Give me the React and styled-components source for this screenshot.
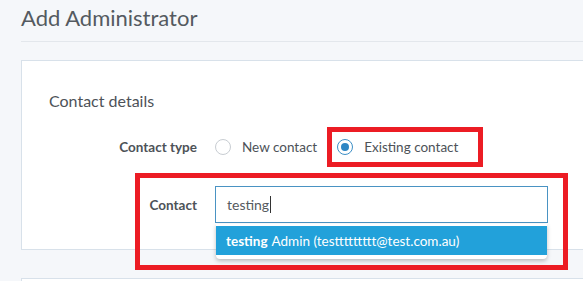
import React from 'react';
import styled, { createGlobalStyle } from 'styled-components';

const GlobalStyle = createGlobalStyle`
  html, body {
    margin: 0;
    padding: 0;
    background: #f5f7fa;
    overflow: hidden;
  }
  body {
    font-family: Lato, 'Open Sans', sans-serif;
    color: #4d5258;
  }
`;

const Page = styled.div`
  padding: 3px 0 0 21px;
  width: 600px;
`;

const Title = styled.h1`
  margin: 0;
  font-size: 22px;
  font-weight: 400;
  line-height: 30px;
  color: #545a60;
  padding-bottom: 8px;
  border-bottom: 1px solid #e3e7ec;
`;

const Card = styled.section`
  margin-top: 18px;
  height: 190px;
  box-sizing: border-box;
  background: #fff;
  border: 1px solid #d8e1ea;
  border-right: none;
  padding: 28px 0 0 27px;
`;

const NextCard = styled(Card)`
  margin-top: 28px;
  height: 40px;
`;

const CardTitle = styled.h2`
  margin: 0;
  font-size: 16px;
  font-weight: 400;
  line-height: 24px;
  color: #4d5258;
`;

const Form = styled.div`
  display: grid;
  grid-template-columns: 148px 1fr;
  column-gap: 18px;
  row-gap: 21px;
  margin-top: 16px;
  align-items: center;
`;

const Label = styled.label`
  justify-self: end;
  font-size: 13.5px;
  font-weight: 700;
  color: #4d5258;
`;

const RadioGroup = styled.div`
  display: flex;
  align-items: center;
  gap: 20px;
  height: 36px;
`;

const RadioOption = styled.div`
  position: relative;
  display: flex;
  align-items: center;
  gap: 11px;
  font-size: 13.5px;
  color: #4d5258;
`;

const RadioCircle = styled.span`
  box-sizing: border-box;
  width: 16px;
  height: 16px;
  border-radius: 50%;
  border: 1px solid ${(p) => (p.checked ? '#3d8fc6' : '#c8cdd2')};
  display: flex;
  align-items: center;
  justify-content: center;

  &::after {
    content: '';
    display: ${(p) => (p.checked ? 'block' : 'none')};
    width: 8px;
    height: 8px;
    border-radius: 50%;
    background: #2d86c4;
  }
`;

const Highlight = styled.span`
  position: absolute;
  inset: ${(p) => p.inset};
  border: 5px solid #ec1c24;
  pointer-events: none;
`;

const Field = styled.div`
  position: relative;
  width: 333px;
`;

const Input = styled.div`
  box-sizing: border-box;
  height: 37px;
  border: 1px solid #4a93c3;
  background: #fff;
  display: flex;
  align-items: center;
  padding-left: 11px;
  font-size: 14px;
  color: #555a60;
`;

const Caret = styled.span`
  display: inline-block;
  width: 1px;
  height: 17px;
  background: #333;
  margin-left: 1px;
`;

const Menu = styled.ul`
  position: absolute;
  top: 38px;
  left: 1px;
  right: 1px;
  margin: 0;
  padding: 2px 0 4px;
  list-style: none;
  background: #fff;
  border-radius: 0 0 4px 4px;
  box-shadow: 0 2px 4px rgba(0, 0, 0, 0.25);
`;

const MenuItem = styled.li`
  height: 29px;
  display: flex;
  align-items: center;
  padding-left: 10px;
  background: #22a1da;
  color: #fff;
  font-size: 13.5px;

  & b {
    font-weight: 700;
    margin-right: 4px;
  }
`;

export default function App() {
  return (
    <>
      <GlobalStyle />
      <Page>
        <Title>Add Administrator</Title>
        <Card>
          <CardTitle>Contact details</CardTitle>
          <Form>
            <Label>Contact type</Label>
            <RadioGroup>
              <RadioOption>
                <RadioCircle />
                New contact
              </RadioOption>
              <RadioOption>
                <RadioCircle checked />
                Existing contact
                <Highlight inset="-12px -25px -12px -10px" />
              </RadioOption>
            </RadioGroup>
            <Label>Contact</Label>
            <Field>
              <Input>
                testing
                <Caret />
              </Input>
              <Menu>
                <MenuItem>
                  <b>testing</b>Admin (testtttttttt@test.com.au)
                </MenuItem>
              </Menu>
              <Highlight inset="-13px -20px -47px -80px" />
            </Field>
          </Form>
        </Card>
        <NextCard />
      </Page>
    </>
  );
}
